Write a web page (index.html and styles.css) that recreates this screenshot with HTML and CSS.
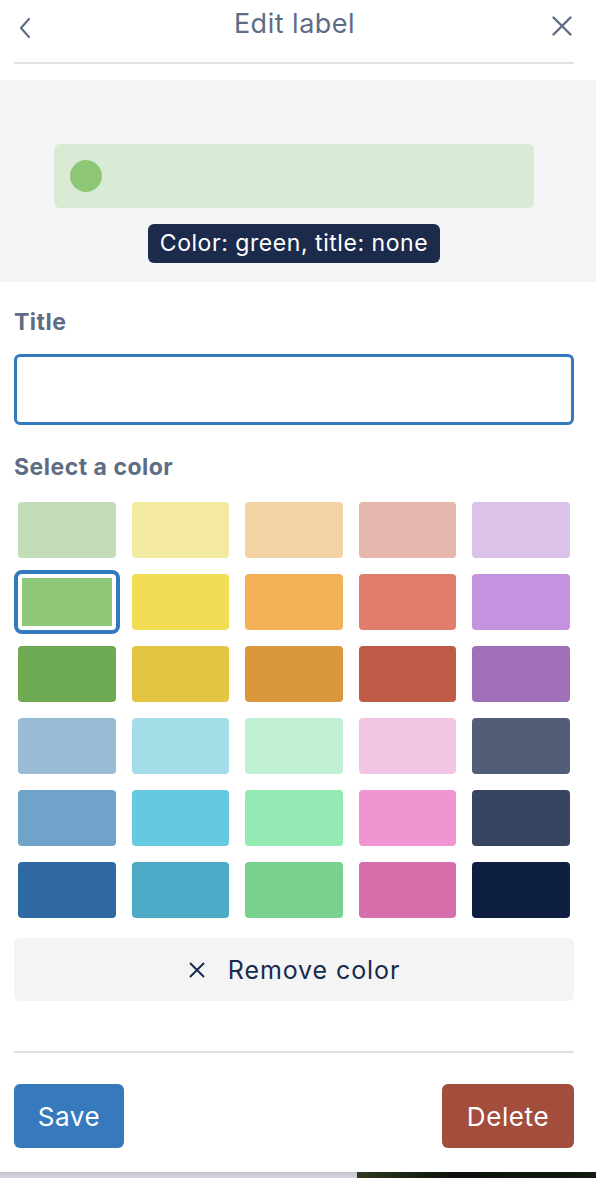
FILE: index.html
```html
<!DOCTYPE html>
<html lang="en">
<head>
<meta charset="utf-8">
<title>Edit label</title>
<link rel="stylesheet" href="styles.css">
</head>
<body>
<div class="popover">
  <header class="head">
    <button class="icon-btn back" aria-label="Back">
      <svg width="20" height="24" viewBox="0 0 20 24"><path d="M12 4 L4 13 L12 22" fill="none" stroke="#5e6c84" stroke-width="2.2" stroke-linecap="round" stroke-linejoin="round"/></svg>
    </button>
    <h2 class="head-title">Edit label</h2>
    <button class="icon-btn close" aria-label="Close">
      <svg width="20" height="20" viewBox="0 0 20 20"><path d="M1.5 1.5 L18.5 18.5 M18.5 1.5 L1.5 18.5" fill="none" stroke="#5e6c84" stroke-width="2.4" stroke-linecap="round"/></svg>
    </button>
  </header>
  <div class="divider"></div>

  <section class="preview-band">
    <div class="preview"><span class="dot"></span></div>
    <div class="tip">Color: green, title: none</div>
  </section>

  <section class="form">
    <label class="field-label" for="title">Title</label>
    <input class="title-input" id="title" type="text">

    <div class="field-label second">Select a color</div>
    <div class="swatches">
      <span class="swatch" style="background:#c3dcb8"></span>
      <span class="swatch" style="background:#f3e9a0"></span>
      <span class="swatch" style="background:#f3d3a4"></span>
      <span class="swatch" style="background:#e6b7af"></span>
      <span class="swatch" style="background:#dbc2e8"></span>

      <span class="swatch selected" style="background:#8fc778"></span>
      <span class="swatch" style="background:#f1de54"></span>
      <span class="swatch" style="background:#f3b157"></span>
      <span class="swatch" style="background:#e07d6b"></span>
      <span class="swatch" style="background:#c592e0"></span>

      <span class="swatch" style="background:#6eaa52"></span>
      <span class="swatch" style="background:#e2c642"></span>
      <span class="swatch" style="background:#da963a"></span>
      <span class="swatch" style="background:#c05b47"></span>
      <span class="swatch" style="background:#a070b9"></span>

      <span class="swatch" style="background:#98bbd6"></span>
      <span class="swatch" style="background:#a3dde8"></span>
      <span class="swatch" style="background:#c2f0d4"></span>
      <span class="swatch" style="background:#f1c5e3"></span>
      <span class="swatch" style="background:#525e78"></span>

      <span class="swatch" style="background:#6fa3ca"></span>
      <span class="swatch" style="background:#65c9e2"></span>
      <span class="swatch" style="background:#92e9b1"></span>
      <span class="swatch" style="background:#f095d1"></span>
      <span class="swatch" style="background:#374562"></span>

      <span class="swatch" style="background:#2e69a2"></span>
      <span class="swatch" style="background:#4dabc7"></span>
      <span class="swatch" style="background:#78d18c"></span>
      <span class="swatch" style="background:#d66eac"></span>
      <span class="swatch" style="background:#0f1f41"></span>
    </div>

    <button class="remove-btn">
      <svg width="18" height="18" viewBox="0 0 18 18"><path d="M2 2 L16 16 M16 2 L2 16" fill="none" stroke="#172b4d" stroke-width="2"/></svg>
      <span>Remove color</span>
    </button>

    <div class="divider bottom"></div>

    <div class="actions">
      <button class="btn save">Save</button>
      <button class="btn delete">Delete</button>
    </div>
  </section>
</div>
<div class="backdrop-strip">
  <div class="strip-left"></div>
  <div class="strip-right"></div>
</div>
</body>
</html>
```

FILE: styles.css
```css
* { box-sizing: border-box; }

html, body {
  margin: 0;
  padding: 0;
  background: #ffffff;
  font-family: Inter, Roboto, "Noto Sans", "Liberation Sans", sans-serif;
  color: #172b4d;
}

body {
  width: 596px;
  height: 1178px;
  overflow: hidden;
  display: flex;
  flex-direction: column;
}

.popover {
  width: 596px;
  height: 1172px;
  background: #ffffff;
  display: flex;
  flex-direction: column;
}

.head {
  height: 62px;
  display: flex;
  align-items: center;
  justify-content: space-between;
  padding: 0 14px 14px 14px;
}

.icon-btn {
  border: 0;
  background: transparent;
  padding: 0;
  width: 30px;
  height: 30px;
  display: flex;
  align-items: center;
  justify-content: center;
  cursor: pointer;
}

.back { margin-left: -2px; margin-top: 5px; }
.close { margin-right: 5px; margin-top: 4px; }

.head-title {
  margin: 0;
  font-size: 27px;
  font-weight: 400;
  color: #5e6c84;
  line-height: 32px;
  letter-spacing: 0.5px;
}

.divider {
  height: 2px;
  background: #dfe1e6;
  margin: 0 22px 0 14px;
}

.preview-band {
  margin-top: 16px;
  height: 202px;
  background: #f4f5f7;
  padding: 64px 62px 0 54px;
  display: flex;
  flex-direction: column;
  align-items: center;
}

.preview {
  width: 480px;
  height: 64px;
  background: #d9ebd4;
  border-radius: 6px;
  display: flex;
  align-items: center;
  padding-left: 16px;
}

.dot {
  width: 32px;
  height: 32px;
  border-radius: 50%;
  background: #8fc778;
}

.tip {
  margin-top: 16px;
  height: 39px;
  padding: 0 12px;
  background: #1c2a4b;
  color: #ffffff;
  border-radius: 6px;
  font-size: 23px;
  letter-spacing: 0.55px;
  line-height: 39px;
  white-space: nowrap;
}

.form {
  padding: 0 22px 0 14px;
  display: flex;
  flex-direction: column;
}

.field-label {
  margin-top: 26px;
  font-size: 23px;
  line-height: 28px;
  font-weight: 700;
  letter-spacing: 0.5px;
  color: #5e6c84;
  display: block;
}

.title-input {
  margin-top: 18px;
  height: 71px;
  width: 100%;
  border: 3px solid #3279bd;
  border-radius: 6px;
  outline: none;
  font-size: 24px;
  padding: 0 14px;
  font-family: inherit;
}

.field-label.second { margin-top: 28px; }

.swatches {
  margin: 21px 4px 0 4px;
  display: grid;
  grid-template-columns: repeat(5, 1fr);
  column-gap: 16px;
  row-gap: 16px;
}

.swatch {
  height: 56px;
  border-radius: 4px;
  display: block;
}

.swatch.selected {
  border: 4px solid #ffffff;
  box-shadow: 0 0 0 4px #3279bd;
  border-radius: 4px;
}

.remove-btn {
  margin-top: 20px;
  height: 63px;
  width: 100%;
  border: 0;
  border-radius: 6px;
  background: #f4f4f5;
  color: #172b4d;
  font-family: inherit;
  font-size: 25px;
  letter-spacing: 0.9px;
  display: flex;
  align-items: center;
  justify-content: center;
  gap: 22px;
}

.divider.bottom {
  margin: 50px 0 0 0;
}

.actions {
  margin-top: 31px;
  display: flex;
  justify-content: space-between;
}

.btn {
  height: 64px;
  border: 0;
  border-radius: 6px;
  color: #ffffff;
  font-family: inherit;
  font-size: 26px;
  letter-spacing: 0.6px;
  padding: 0;
}

.save { width: 110px; background: #3679bd; }
.delete { width: 132px; background: #a34e3c; }

.backdrop-strip {
  height: 6px;
  display: flex;
}

.strip-left {
  width: 357px;
  background: linear-gradient(#c3c6cf, #d1d4dc);
}

.strip-right {
  flex: 1;
  background: linear-gradient(90deg, #2f3a20, #0c120b 40%, #111a10);
}
```
